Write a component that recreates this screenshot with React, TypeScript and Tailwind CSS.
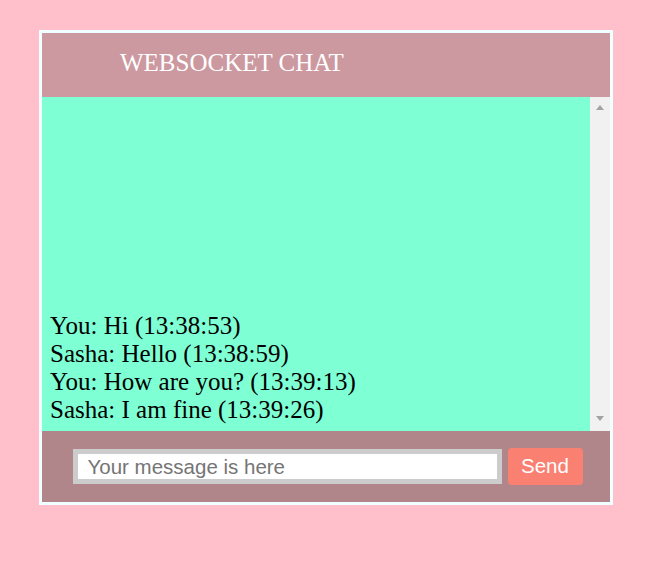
import React, { useState } from 'react';

interface Message {
  author: string;
  text: string;
  time: string;
}

const messages: Message[] = [
  { author: 'You', text: 'Hi', time: '13:38:53' },
  { author: 'Sasha', text: 'Hello', time: '13:38:59' },
  { author: 'You', text: 'How are you?', time: '13:39:13' },
  { author: 'Sasha', text: 'I am fine', time: '13:39:26' },
];

const serif = "font-['Liberation_Serif','Times_New_Roman',serif]";

const App: React.FC = () => {
  const [draft, setDraft] = useState('');

  return (
    <div className="min-h-screen bg-[#ffc0cb] pt-[30px]">
      <div className="ml-[39px] w-[574px] border-[3px] border-[#f0ffff]">
        {/* Header */}
        <div className={`h-[64px] bg-[#cc99a1] flex items-center pl-[78px] pb-[4px] text-white text-[25px] ${serif}`}>
          WEBSOCKET CHAT
        </div>

        {/* Messages + scrollbar */}
        <div className="h-[334px] flex bg-[#7fffd4]">
          <div className={`flex-1 flex flex-col justify-end pl-2 pb-[7px] text-black text-[25px] leading-[28px] ${serif}`}>
            {messages.map((m, i) => (
              <div key={i}>
                {m.author}: {m.text} ({m.time})
              </div>
            ))}
          </div>
          <div className="w-5 bg-[#f1f1f1] flex flex-col justify-between items-center pt-[8px] pb-[10px]">
            <div className="w-0 h-0 border-x-[4.5px] border-x-transparent border-b-[5px] border-b-[#a3a3a3]" />
            <div className="w-0 h-0 border-x-[4.5px] border-x-transparent border-t-[5px] border-t-[#a3a3a3]" />
          </div>
        </div>

        {/* Footer form */}
        <div className="h-[71px] bg-[#b0868b] flex items-center justify-center gap-[6px] pl-[3px]">
          <input
            type="text"
            value={draft}
            onChange={(e) => setDraft(e.target.value)}
            placeholder="Your message is here"
            className="w-[429px] h-[35px] border-[5px] border-[#cccccc] bg-white px-[10px] text-[20.5px] text-black placeholder:text-[#757575] font-['Liberation_Sans',Arial,sans-serif] outline-none"
          />
          <button className="w-[75px] h-[37px] bg-[#fa8072] rounded text-white text-[20.5px] font-['Liberation_Sans',Arial,sans-serif]">
            Send
          </button>
        </div>
      </div>
    </div>
  );
};

export default App;
